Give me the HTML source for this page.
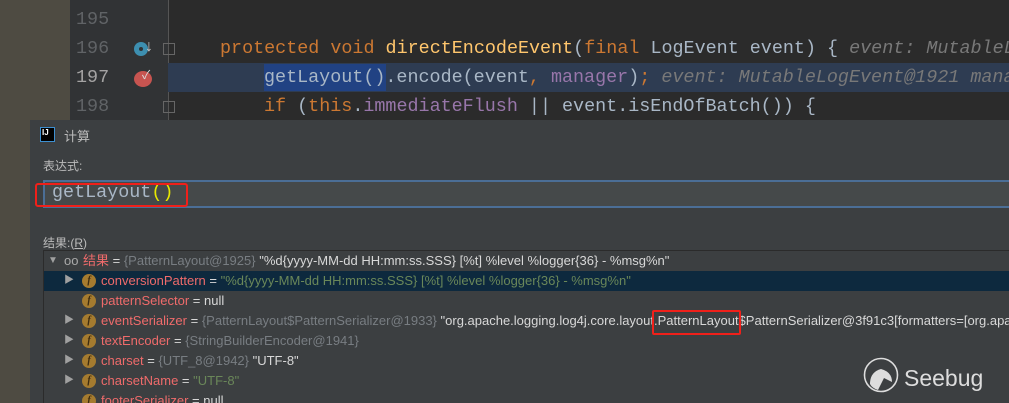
<!DOCTYPE html>
<html style="overflow:hidden;width:1009px;height:403px"><head><meta charset="utf-8"><style>
*{margin:0;padding:0;box-sizing:border-box}
body{width:1009px;height:403px;overflow:hidden;background:#2b2b2b;position:relative;font-family:"Liberation Sans","Noto Sans CJK SC",sans-serif}
.abs{position:absolute;white-space:nowrap}
.mono{font-family:"Liberation Mono","DejaVu Sans Mono",monospace;font-size:18.4px}
.ln{color:#606366;font-family:"Liberation Mono",monospace;font-size:18.4px}
.k{color:#cc7832}.f{color:#ffc66d}.t{color:#a9b7c6}.p{color:#9876aa}.c{color:#787878;font-style:italic}
.row{position:absolute;left:44px;width:965px;overflow:hidden;height:20px;font-size:13px;line-height:20px;white-space:nowrap}
.ic{position:absolute;left:38px;top:3px;width:14px;height:14px;border-radius:50%;background:#a57b2f;color:#3c2b10;font-size:10px;line-height:14px;text-align:center;font-style:italic;font-family:"Liberation Serif",serif;font-weight:bold}
.ar{position:absolute;left:20px;top:0;color:#a0a0a0;font-size:10px}
.nm{color:#ef6b6b}.g{color:#787d82}.s{color:#6a8759}.w{color:#d8d8d8}
</style></head><body>
<div class="abs" style="left:0;top:0;width:70px;height:403px;background:#4e4b42"></div>
<div class="abs" style="left:70px;top:0;width:98px;height:120px;background:#313335"></div>
<div class="abs" style="left:168px;top:0;width:1px;height:120px;background:#555"></div>
<div class="abs" style="left:168px;top:63px;width:841px;height:29px;background:#2e3c52"></div>
<div class="abs" style="left:264px;top:64px;width:122px;height:27px;background:#214283"></div>
<div class="abs ln" style="left:76px;top:9px">195</div>
<div class="abs ln" style="left:76px;top:38px">196</div>
<div class="abs ln" style="left:76px;top:67px;color:#a4a3a3">197</div>
<div class="abs ln" style="left:76px;top:96px">198</div>
<div class="abs" style="left:134px;top:42px;width:14px;height:14px;border-radius:50%;background:#3d8fb0"></div>
<div class="abs" style="left:139px;top:47px;width:4px;height:4px;border-radius:50%;background:#313335"></div>
<div class="abs" style="left:145px;top:38px;color:#ccc;font-size:16px">↓</div>
<div class="abs" style="left:134px;top:71px;width:18px;height:16px;border-radius:50%;background:#c75450"></div>
<div class="abs" style="left:142px;top:66px;color:#ddd;font-size:12px">✓</div>
<div class="abs" style="left:163px;top:43px;width:12px;height:12px;border:1px solid #666"></div>
<div class="abs" style="left:163px;top:101px;width:12px;height:12px;border:1px solid #666"></div>
<div class="abs mono" style="left:220px;top:38px"><span class="k">protected void </span><span class="f">directEncodeEvent</span><span class="t">(</span><span class="k">final </span><span class="t">LogEvent event) {  </span><span class="c">event: MutableLogEvent@1921</span></div>
<div class="abs mono" style="left:264px;top:67px"><span class="t">getLayout().encode(event</span><span class="k">, </span><span class="p">manager</span><span class="t">)</span><span class="k">;</span><span class="c">  event: MutableLogEvent@1921  manager</span></div>
<div class="abs mono" style="left:264px;top:96px"><span class="k">if </span><span class="t">(</span><span class="k">this</span><span class="t">.</span><span class="p">immediateFlush</span><span class="t"> || event.isEndOfBatch()) {</span></div>
<div class="abs" style="left:30px;top:120px;width:979px;height:283px;background:#3c3f41;overflow:hidden"></div>
<div class="abs" style="left:40px;top:127px;width:15px;height:15px;background:#000;border:1px solid #3d8fd0;color:#fff;font-size:8px;font-weight:bold;line-height:9px;padding-left:1px">IJ</div>
<div class="abs" style="left:64px;top:126px;color:#bbb;font-size:13px">计算</div>
<div class="abs" style="left:43px;top:157px;color:#bbb;font-size:12px">表达式:</div>
<div class="abs" style="left:43px;top:180px;width:966px;height:28px;background:#45494a;border-top:2px solid #4b6e96;border-bottom:2px solid #4b6e96;border-left:2px solid #4b6e96"></div>
<div class="abs mono" style="left:52px;top:182px;color:#a9b7c6">getLayout<span style="color:#e8e800">()</span></div>
<div class="abs" style="left:35px;top:183px;width:153px;height:24px;border:2px solid #f0201a;border-radius:3px"></div>
<div class="abs" style="left:43px;top:234px;color:#bbb;font-size:12px">结果:(<u>R</u>)</div>
<div class="abs" style="left:43px;top:250px;width:966px;height:153px;border-top:1px solid #2b2b2b;border-left:1px solid #2b2b2b"></div>
<div class="row" style="top:251px"><span class="ar" style="left:4px">▼</span><span style="position:absolute;left:20px;color:#aaa">oo</span><span style="position:absolute;left:39px"><span class="nm">结果</span><span class="w"> = </span><span class="g">{PatternLayout@1925}</span><span class="w"> "%d{yyyy-MM-dd HH:mm:ss.SSS} [%t] %level %logger{36} - %msg%n"</span></span></div>
<div class="row" style="top:271px;background:#0d293e"><span class="ar">▶</span><span class="ic">f</span><span style="position:absolute;left:57px"><span class="nm">conversionPattern</span><span class="w"> = </span><span class="s">"%d{yyyy-MM-dd HH:mm:ss.SSS} [%t] %level %logger{36} - %msg%n"</span></span></div>
<div class="row" style="top:291px"><span class="ic">f</span><span style="position:absolute;left:57px"><span class="nm">patternSelector</span><span class="w"> = null</span></span></div>
<div class="row" style="top:311px"><span class="ar">▶</span><span class="ic">f</span><span style="position:absolute;left:57px"><span class="nm">eventSerializer</span><span class="w"> = </span><span class="g">{PatternLayout$PatternSerializer@1933}</span><span class="w"> "org.apache.logging.log4j.core.layout.PatternLayout$PatternSerializer@3f91c3[formatters=[org.apache</span></span></div>
<div class="row" style="top:331px"><span class="ar">▶</span><span class="ic">f</span><span style="position:absolute;left:57px"><span class="nm">textEncoder</span><span class="w"> = </span><span class="g">{StringBuilderEncoder@1941}</span></span></div>
<div class="row" style="top:351px"><span class="ar">▶</span><span class="ic">f</span><span style="position:absolute;left:57px"><span class="nm">charset</span><span class="w"> = </span><span class="g">{UTF_8@1942}</span><span class="w"> "UTF-8"</span></span></div>
<div class="row" style="top:371px"><span class="ar">▶</span><span class="ic">f</span><span style="position:absolute;left:57px"><span class="nm">charsetName</span><span class="w"> = </span><span class="s">"UTF-8"</span></span></div>
<div class="row" style="top:391px;height:12px"><span class="ic">f</span><span style="position:absolute;left:57px"><span class="nm">footerSerializer</span><span class="w"> = null</span></span></div>
<div class="abs" style="left:652px;top:310px;width:89px;height:25px;border:2px solid #f0201a;border-radius:2px"></div>
<svg class="abs" style="left:862px;top:356px" width="120" height="42"><circle cx="19" cy="19" r="16.5" fill="none" stroke="#ddd" stroke-width="1.6"/><path d="M8 28 Q8 16 19 13 Q30 16 30 26 L22 22 L16 34 Q10 32 8 28Z" fill="#ddd"/><text x="42" y="30" fill="#ddd" font-size="23" font-family="Liberation Sans">Seebug</text></svg>
</body></html>
